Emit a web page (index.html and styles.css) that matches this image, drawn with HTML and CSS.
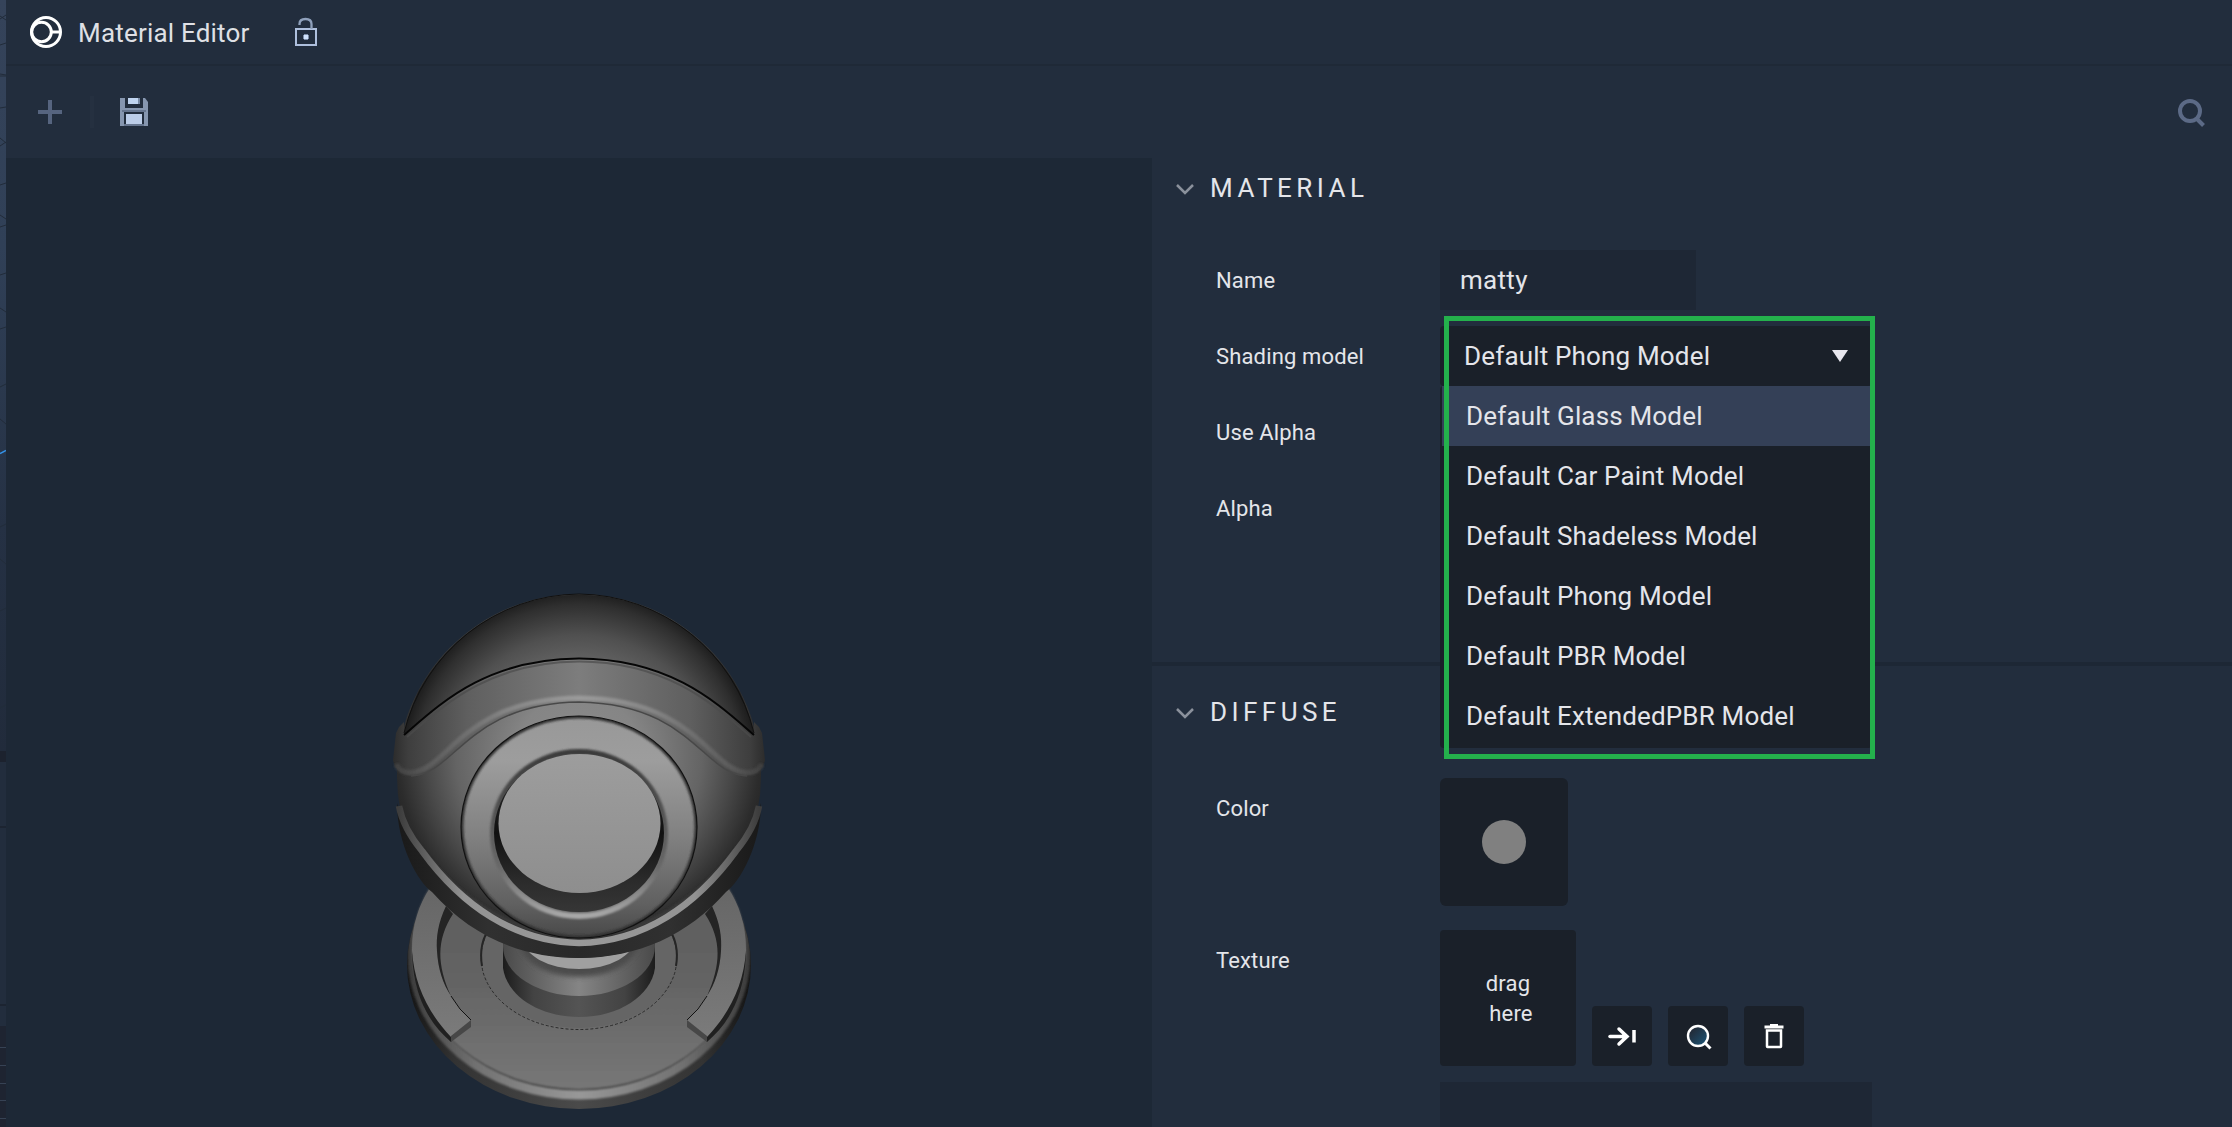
FILE: index.html
```html
<!DOCTYPE html>
<html lang="en">
<head>
<meta charset="utf-8">
<title>Material Editor</title>
<link rel="stylesheet" href="styles.css">
</head>
<body>
<div class="app">
  <aside class="neighbour">
    <svg width="6" height="1127" viewBox="0 0 6 1127">
      <defs><linearGradient id="sky" x1="0" y1="0" x2="0" y2="1"><stop offset="0" stop-color="#35435a"/><stop offset=".33" stop-color="#304057"/><stop offset=".7" stop-color="#253144"/><stop offset="1" stop-color="#212b3b"/></linearGradient></defs>
      <rect width="6" height="751" fill="url(#sky)"/>
      <rect y="751" width="6" height="11" fill="#1c222e"/>
      <rect y="762" width="6" height="264" fill="#222d3d"/>
      <rect y="1026" width="6" height="101" fill="#1e2431"/>
      <path d="M0 16l6 4M0 19l6-4M0 45l6-2M0 74l6 1M0 76h6M0 108l6-1M0 138l6 5M0 146l6-4M0 185l6-2M0 215l6 4M0 227l6-2M0 275l6-2M0 308l6 4M0 329l6-2M0 387l6-3M0 419l6 5M0 527l6-3M0 559l6 5M0 611l6-3M0 708l6-3" stroke="#222c3a" fill="none"/>
      <path d="M0 453.500l6-3" stroke="#3493e8" stroke-width="1.500"/>
      <path d="M0 827h6M0 1005h6" stroke="#1c2431" stroke-width="2"/>
      <path d="M0 1047.500h6M0 1065.500h6M0 1083.500h6M0 1100.500h6M0 1118.500h6" stroke="#364254"/>
    </svg>
  </aside>
  <main class="editor">
    <header class="titlebar">
      <svg class="logo" width="34" height="34" viewBox="0 0 34 34" fill="none" stroke="#fff"><circle cx="17" cy="17" r="14.500" stroke-width="3"/><circle cx="12.500" cy="17" r="9.800" stroke-width="3"/><path d="M22 17h10" stroke-width="3"/></svg>
      <h1 class="title">Material Editor</h1>
      <svg class="lock" width="22" height="30" viewBox="0 0 22 30" fill="none" stroke="#aebfdd" stroke-width="2"><path d="M1 12h20v16H1z"/><path d="M4.500 8V7q0-5 6-5t6 5v5" stroke="#8fa0bb" stroke-width="2.300"/><path d="M8 20h6M11 17v6" stroke="#7d8da8" stroke-width="4"/><path d="M9 20h4" stroke="#d0e2fb" stroke-width="4"/></svg>
    </header>
    <div class="toolbar">
      <svg width="24" height="24" viewBox="0 0 24 24"><path d="M0 12h24M12 0v24" stroke="#56647f" stroke-width="4"/></svg>
      <span class="separator"></span>
      <svg width="28" height="28" viewBox="0 0 28 28"><path d="M0 0h25l3 4v24H0z" fill="#8696af"/><path d="M5 0h18v10H5z" fill="#222d3d"/><path d="M8 0h12v6H8z" fill="#bfd3ef"/><path d="M18 0h2v6h-2z" fill="#7889a3"/><path d="M2 13h24" stroke="#66758e" stroke-width="2"/><path d="M4 14h20v14H4z" fill="#222d3d"/><path d="M6 16h16v10H6z" fill="#bccde8"/><path d="M4 27h20" stroke="#66758e" stroke-width="2"/></svg>
      <svg class="search" width="28" height="30" viewBox="0 0 28 30" fill="none" stroke="#5c6a86"><circle cx="12" cy="12" r="10" stroke-width="4"/><path d="M19 20l6.500 6.500" stroke-width="4"/></svg>
    </div>
    <div class="content">
      <section class="viewport">
        <svg class="ball" width="400" height="547" viewBox="380 580 400 547">
          <defs>
            <radialGradient id="body" gradientUnits="userSpaceOnUse" cx="579" cy="755" r="205"><stop offset="0" stop-color="#8c8c8c"/><stop offset=".3" stop-color="#858585"/><stop offset=".6" stop-color="#646464"/><stop offset=".75" stop-color="#474747"/><stop offset=".88" stop-color="#2c2c2c"/><stop offset="1" stop-color="#1d1d1d"/></radialGradient>
            <radialGradient id="top" gradientUnits="userSpaceOnUse" cx="579" cy="770" r="180"><stop offset="0" stop-color="#7a7a7a"/><stop offset=".55" stop-color="#696969"/><stop offset=".75" stop-color="#505050"/><stop offset=".92" stop-color="#2f2f2f"/><stop offset="1" stop-color="#1a1a1a"/></radialGradient>
            <linearGradient id="band" x1="0" x2="1"><stop offset="0" stop-color="#2c2c2c"/><stop offset=".04" stop-color="#3e3e3e"/><stop offset=".2" stop-color="#5f5f5f"/><stop offset=".5" stop-color="#7d7d7d"/><stop offset=".8" stop-color="#5f5f5f"/><stop offset=".96" stop-color="#3e3e3e"/><stop offset="1" stop-color="#2c2c2c"/></linearGradient>
            <linearGradient id="ridge" x1="0" x2="1"><stop offset="0" stop-color="#404040"/><stop offset=".08" stop-color="#5a5a5a"/><stop offset=".3" stop-color="#858585"/><stop offset=".5" stop-color="#9b9b9b"/><stop offset=".7" stop-color="#858585"/><stop offset=".92" stop-color="#5a5a5a"/><stop offset="1" stop-color="#404040"/></linearGradient>
            <linearGradient id="ring" x1="0" y1="0" x2="0" y2="1"><stop offset="0" stop-color="#989898"/><stop offset=".2" stop-color="#9d9d9d"/><stop offset=".55" stop-color="#808080"/><stop offset=".85" stop-color="#606060"/><stop offset="1" stop-color="#484848"/></linearGradient>
            <linearGradient id="lip" x1="0" y1="0" x2="0" y2="1"><stop offset="0" stop-color="#3b3b3b"/><stop offset=".3" stop-color="#4e4e4e"/><stop offset=".7" stop-color="#686868"/><stop offset="1" stop-color="#a8a8a8"/></linearGradient>
            <linearGradient id="hole" x1="0" y1="0" x2="0" y2="1"><stop offset="0" stop-color="#333"/><stop offset=".5" stop-color="#111"/><stop offset=".8" stop-color="#2b2b2b"/><stop offset="1" stop-color="#363636"/></linearGradient>
            <linearGradient id="disc" x1="0" y1="0" x2="0" y2="1"><stop offset="0" stop-color="#9d9d9d"/><stop offset="1" stop-color="#8e8e8e"/></linearGradient>
            <linearGradient id="rim" x1="0" x2="1"><stop offset="0" stop-color="#3d3d3d"/><stop offset=".06" stop-color="#5a5a5a"/><stop offset=".18" stop-color="#939393"/><stop offset=".5" stop-color="#999"/><stop offset=".82" stop-color="#939393"/><stop offset=".94" stop-color="#5a5a5a"/><stop offset="1" stop-color="#3d3d3d"/></linearGradient>
            <linearGradient id="under" x1="0" x2="1"><stop offset="0" stop-color="#191919"/><stop offset=".25" stop-color="#303030"/><stop offset=".5" stop-color="#292929"/><stop offset=".75" stop-color="#303030"/><stop offset="1" stop-color="#191919"/></linearGradient>
            <linearGradient id="side" gradientUnits="userSpaceOnUse" x1="407" x2="751" y1="0" y2="0"><stop offset="0" stop-color="#141414"/><stop offset=".14" stop-color="#333"/><stop offset=".5" stop-color="#4a4a4a"/><stop offset=".86" stop-color="#333"/><stop offset="1" stop-color="#141414"/></linearGradient>
            <linearGradient id="edge" gradientUnits="userSpaceOnUse" x1="407" x2="751" y1="0" y2="0"><stop offset="0" stop-color="#3a3a3a"/><stop offset=".2" stop-color="#717171"/><stop offset=".5" stop-color="#989898"/><stop offset=".8" stop-color="#717171"/><stop offset="1" stop-color="#3a3a3a"/></linearGradient>
            <linearGradient id="plate" x1="0" y1="0" x2="0" y2="1"><stop offset="0" stop-color="#5a5a5a"/><stop offset=".6" stop-color="#636363"/><stop offset="1" stop-color="#777"/></linearGradient>
            <linearGradient id="neck" x1="0" x2="1"><stop offset="0" stop-color="#1c1c1c"/><stop offset=".2" stop-color="#434343"/><stop offset=".5" stop-color="#545454"/><stop offset=".8" stop-color="#434343"/><stop offset="1" stop-color="#1c1c1c"/></linearGradient>
            <linearGradient id="collar" x1="0" x2="1"><stop offset="0" stop-color="#4a4a4a"/><stop offset=".5" stop-color="#858585"/><stop offset="1" stop-color="#4a4a4a"/></linearGradient>
            <linearGradient id="arc" gradientUnits="userSpaceOnUse" x1="0" x2="0" y1="880" y2="1040"><stop offset="0" stop-color="#656565"/><stop offset="1" stop-color="#7b7b7b"/></linearGradient>
            <filter id="soft" x="-10%" y="-10%" width="120%" height="120%"><feGaussianBlur stdDeviation="2.500"/></filter>
            <filter id="fine" x="-10%" y="-10%" width="120%" height="120%"><feGaussianBlur stdDeviation="1"/></filter>
            <clipPath id="plateClip"><ellipse cx="579" cy="965" rx="172" ry="144"/></clipPath>
            <clipPath id="ringClip"><ellipse cx="579" cy="827" rx="118" ry="111"/></clipPath>
            <clipPath id="neckClip"><path d="M503 940v28c4 28 36 49 76 49s72-21 76-49v-28z"/></clipPath>
          </defs>
          <!-- pedestal -->
          <ellipse cx="579" cy="965" rx="172" ry="144" fill="url(#side)"/>
          <g clip-path="url(#plateClip)"><ellipse cx="579" cy="955" rx="167" ry="140" fill="none" stroke="url(#edge)" stroke-width="9" filter="url(#fine)"/></g>
          <ellipse cx="579" cy="950" rx="167" ry="139" fill="url(#plate)" filter="url(#fine)"/>
          <path d="M412 955C414 998 430 1024 451 1042L455 1036C432 1014 420 990 414 945z" fill="#202020"/>
          <path d="M746 955C744 998 728 1024 707 1042L703 1036C726 1014 738 990 744 945z" fill="#202020"/>
          <g fill="url(#arc)">
            <path d="M430 888C419 904 412 925 412 950C414 985 429 1014 451 1037L471 1021C452 1000 438 981 437 948C438 930 444 915 454 903z"/>
            <path d="M728 888C739 904 746 925 746 950C744 985 729 1014 707 1037L687 1021C706 1000 720 981 721 948C720 930 714 915 704 903z"/>
          </g>
          <path d="M451 1036l20-16v7l-20 15zM707 1036l-20-16v7l20 15z" fill="#474747"/>
          <path d="M446 906C438 923 436 937 437 951C438 969 443 984 451 996C437 965 436 940 453 914z" fill="#242424"/>
          <path d="M712 906C720 923 722 937 721 951C720 969 715 984 707 996C721 965 722 940 705 914z" fill="#242424"/>
          <path d="M451 996q8 14 20 24M707 996q-8 14-20 24" fill="none" stroke="#111"/>
          <ellipse cx="579" cy="956" rx="98" ry="72" fill="#656565"/>
          <path d="M487 934Q478 950 483 972A98 72 0 0 0 675 972Q680 950 671 934" fill="none" stroke="#1c1c1c" stroke-width=".8" stroke-dasharray="3 2"/>
          <path d="M486 934Q479 948 482 966M672 934Q679 948 676 966" fill="none" stroke="#252525" stroke-width="2"/>
          <path d="M503 940v28c4 28 36 49 76 49s72-21 76-49v-28z" fill="url(#neck)"/>
          <g clip-path="url(#neckClip)">
            <ellipse cx="579" cy="946" rx="76" ry="50" fill="url(#collar)"/>
            <ellipse cx="579" cy="940" rx="60" ry="37" fill="#4b4b4b" filter="url(#soft)"/>
            <ellipse cx="579" cy="938" rx="56" ry="31" fill="#a0a0a0"/>
          </g>
          <!-- head -->
          <circle cx="579" cy="776" r="182" fill="url(#body)"/>
          <path d="M397 803Q402 826 420 850C460 906 515 942 579 943C643 942 698 906 738 850Q756 826 761 803C761 845 740 882 726 892C688 935 638 958 579 958C520 958 470 935 432 892C418 882 397 845 397 803z" fill="url(#under)"/>
          <path d="M420 848C460 901 516 936 579 937C642 936 698 901 738 848" fill="none" stroke="#3a3a3a" stroke-width="4" filter="url(#fine)"/>
          <path d="M399 806Q403 828 422 851C462 906 515 942 579 943C643 942 696 906 736 851Q755 828 759 806" fill="none" stroke="url(#rim)" stroke-width="6.500"/>
          <path d="M404 722L399 727L396 733L393 760C395 771 404 777 416 775C452 769 478 703 579 701C680 703 706 769 742 775C753 777 763 771 765 760L762 733L759 727L754 722V735C718 704 672 658 579 658C486 658 440 704 404 735z" fill="url(#band)"/>
          <path d="M404 735A182 182 0 0 1 418 692A182 182 0 0 1 740 692A182 182 0 0 1 754 735C718 704 672 658.500 579 658C486 658.500 440 704 404 735z" fill="url(#top)"/>
          <path d="M404 735C440 704 486 659 579 658.500C672 659 718 704 754 735" fill="none" stroke="#060606" stroke-width="2"/>
          <path d="M407 737C442 707 488 662 579 661.500C670 662 716 707 751 737" fill="none" stroke="#4b4b4b" stroke-width="2" opacity=".7"/>
          <path d="M396 764Q400 773 412 772.500C448 770 462 699 579 698C696 699 710 770 746 772.500Q758 773 762 764" fill="none" stroke="url(#ridge)" stroke-width="5" filter="url(#fine)"/>
          <path d="M411 776C455 775 466 704 579 702C692 704 703 775 747 776" fill="none" stroke="#484848" stroke-width="1.500"/>
          <path d="M404 733A182 182 0 0 1 579 594A182 182 0 0 1 754 733" fill="none" stroke="#101010" stroke-width="1"/>
          <!-- lens -->
          <ellipse cx="579" cy="827" rx="118" ry="111" fill="url(#ring)"/>
          <g clip-path="url(#ringClip)"><ellipse cx="579" cy="827" rx="118" ry="111" fill="none" stroke="#333" stroke-width="5" filter="url(#fine)"/></g>
          <ellipse cx="579" cy="827" rx="118" ry="111" fill="none" stroke="#111" stroke-width="1.200"/>
          <ellipse cx="579" cy="834" rx="86" ry="82" fill="none" stroke="url(#lip)" stroke-width="6" filter="url(#fine)"/>
          <ellipse cx="579" cy="833" rx="85" ry="79" fill="url(#hole)"/>
          <ellipse cx="579.500" cy="823.500" rx="81" ry="69.500" fill="url(#disc)"/>
        </svg>
      </section>
      <section class="properties">
        <div class="group">
          <h2 class="group-title"><svg width="18" height="12" viewBox="0 0 18 12"><path d="M1 2l8 8 8-8" fill="none" stroke="#8b919c" stroke-width="2.500"/></svg>MATERIAL</h2>
          <div class="row"><span class="label">Name</span><div class="input name">matty</div></div>
          <div class="row"><span class="label">Shading model</span>
            <div class="select"><span>Default Phong Model</span><svg width="16" height="12" viewBox="0 0 16 12"><path d="M0 0h16L8 12z" fill="#e8e7ee"/></svg>
              <ul class="menu">
                <li class="active">Default Glass Model</li>
                <li>Default Car Paint Model</li>
                <li>Default Shadeless Model</li>
                <li>Default Phong Model</li>
                <li>Default PBR Model</li>
                <li>Default ExtendedPBR Model</li>
              </ul>
              <div class="highlight"></div>
            </div>
          </div>
          <div class="row"><span class="label">Use Alpha</span></div>
          <div class="row"><span class="label">Alpha</span></div>
        </div>
        <div class="group diffuse">
          <h2 class="group-title"><svg width="18" height="12" viewBox="0 0 18 12"><path d="M1 2l8 8 8-8" fill="none" stroke="#8b919c" stroke-width="2.500"/></svg>DIFFUSE</h2>
          <div class="row color-row"><span class="label">Color</span><div class="swatch"><i class="dot"></i></div></div>
          <div class="row texture-row"><span class="label">Texture</span>
            <div class="drop"><span>drag</span><span class="second">here</span></div>
            <button class="tool"><svg width="60" height="60" viewBox="0 0 60 60" fill="none" stroke="#fff" stroke-linecap="round"><path d="M18 30.500h14" stroke-width="3.500"/><path d="M27 23l8 7.500-8 7.500" stroke-width="3.500"/><path d="M31 26l4 4.500-4 4.500z" fill="#fff"/><path d="M42 24v12.500" stroke-width="3.500" stroke-linecap="butt"/></svg></button>
            <button class="tool"><svg width="60" height="60" viewBox="0 0 60 60" fill="none" stroke="#fff"><defs><linearGradient id="glass" x1="0" y1="0" x2="1" y2="1"><stop offset=".2" stop-color="#222b38"/><stop offset="1" stop-color="#1b587c"/></linearGradient></defs><circle cx="30" cy="30" r="10" fill="url(#glass)" stroke-width="2.400"/><path d="M37 37l5.500 5.500" stroke-width="3"/></svg></button>
            <button class="tool"><svg width="60" height="60" viewBox="0 0 60 60" fill="none" stroke="#fff"><path d="M20.500 21h19" stroke-width="3"/><path d="M26 19h8" stroke-width="2"/><path d="M23 24.500h14v16q0 .500-.500.500h-13q-.500 0-.500-.500z" stroke-width="2.500"/></svg></button>
          </div>
          <div class="row"><span class="label"></span><div class="input path"></div></div>
        </div>
      </section>
    </div>
  </main>
</div>
</body>
</html>
```

FILE: styles.css
```css
* { box-sizing: border-box; }
body { margin: 0; background: #222d3d; color: #e4e5ea; font-family: Roboto, "Liberation Sans", sans-serif; font-size: 26px; overflow: hidden; }
svg { display: block; flex: none; }
.app { display: flex; width: 2232px; height: 1127px; overflow: hidden; }
.neighbour { width: 6px; }
.editor { flex: 1; display: flex; flex-direction: column; }
.titlebar { display: flex; align-items: center; height: 66px; padding: 0 0 0 23px; border-bottom: 2px solid #1f2937; }
.title { margin: 2px 0 0 15px; width: 217px; font-size: 26px; font-weight: 400; letter-spacing: .2px; color: #dfe0e5; }
.toolbar { display: flex; align-items: center; height: 92px; padding: 0 26px 0 32px; }
.separator { width: 4px; height: 32px; margin: 0 26px 0 28px; background: #253040; }
.search { margin: 3px 0 0 auto; }
.content { display: flex; flex: 1; min-height: 0; }
.viewport { width: 1146px; background: #1d2836; padding: 422px 0 0 374px; }
.properties { flex: 1; min-width: 0; }
.group { height: 508px; border-bottom: 4px solid #1d2735; }
.group-title { display: flex; align-items: center; gap: 16px; height: 60px; margin: 0 0 32px; padding: 0 0 0 24px; font-size: 26px; font-weight: 400; letter-spacing: 4.450px; }
.group-title svg { margin-top: 1px; }
.diffuse { padding-top: 16px; border: 0; }
.diffuse .group-title { margin-bottom: 36px; }
.row { display: flex; height: 60px; margin-bottom: 16px; padding-left: 64px; }
.label { width: 224px; line-height: 62px; font-size: 22px; letter-spacing: .15px; }
.input { height: 60px; padding-left: 20px; line-height: 60px; letter-spacing: .3px; background: #1e2735; }
.name { width: 256px; }
.path { width: 432px; }
.select { position: relative; display: flex; justify-content: space-between; align-items: center; width: 432px; height: 60px; padding: 0 24px; border-radius: 4px; background: #1a2029; letter-spacing: .17px; }
.menu { position: absolute; z-index: 1; left: 0; top: 60px; width: 432px; margin: 0; padding: 0 2px 2px; list-style: none; background: #1a2029; border-radius: 4px; }
.menu li { height: 60px; padding-left: 24px; line-height: 60px; }
.menu .active { background: #344057; }
.highlight { position: absolute; z-index: 2; left: 4px; top: -10px; width: 431px; height: 443px; border: 5px solid #24b14c; }
.color-row { height: 128px; margin-bottom: 24px; }
.swatch { display: flex; align-items: center; justify-content: center; width: 128px; height: 128px; border-radius: 6px; background: #1a2029; }
.dot { width: 44px; height: 44px; border-radius: 50%; background: #808080; }
.texture-row { height: 136px; align-items: flex-end; }
.texture-row .label { align-self: flex-start; }
.drop { display: flex; flex-direction: column; align-items: center; justify-content: center; width: 136px; height: 136px; padding-top: 2px; border-radius: 4px; background: #1a2029; color: #e4e5ea; font-size: 22px; line-height: 30px; letter-spacing: .2px; }
.second { padding-left: 6px; }
.tool { width: 60px; height: 60px; margin-left: 16px; padding: 0; border: 0; border-radius: 4px; background: #1a2029; }
```
